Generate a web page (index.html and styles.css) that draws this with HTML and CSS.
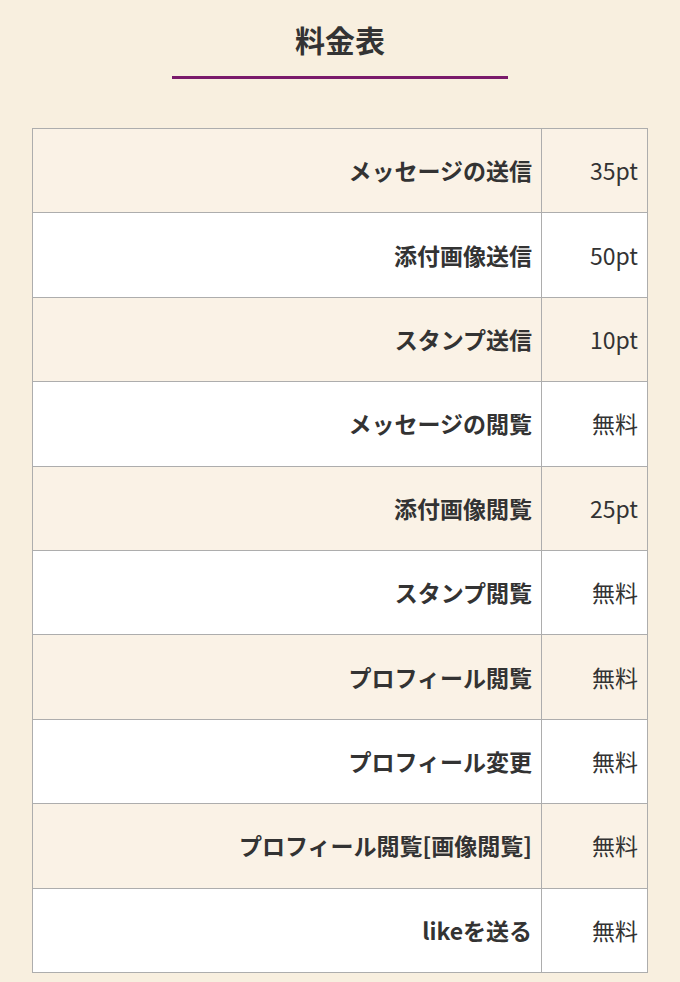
FILE: index.html
```html
<!DOCTYPE html>
<html lang="ja">
<head>
<meta charset="utf-8">
<link rel="stylesheet" href="styles.css">
</head>
<body>
<div class="page">
  <h2 class="title">料金表</h2>
  <div class="rule"></div>
  <table class="price">
    <tbody>
      <tr><th>メッセージの送信</th><td>35pt</td></tr>
      <tr><th>添付画像送信</th><td>50pt</td></tr>
      <tr><th>スタンプ送信</th><td>10pt</td></tr>
      <tr><th>メッセージの閲覧</th><td>無料</td></tr>
      <tr><th>添付画像閲覧</th><td>25pt</td></tr>
      <tr><th>スタンプ閲覧</th><td>無料</td></tr>
      <tr><th>プロフィール閲覧</th><td>無料</td></tr>
      <tr><th>プロフィール変更</th><td>無料</td></tr>
      <tr><th>プロフィール閲覧[画像閲覧]</th><td>無料</td></tr>
      <tr><th>likeを送る</th><td>無料</td></tr>
    </tbody>
  </table>
</div>
</body>
</html>
```
FILE: styles.css
```css
html, body {
  margin: 0;
  padding: 0;
}
body {
  background: #f8efdf;
  font-family: "Noto Sans CJK JP", "Noto Sans", sans-serif;
  color: #333333;
}
.page {
  display: flex;
  flex-direction: column;
  align-items: center;
  padding-top: 23px;
}
.title {
  margin: 0;
  font-size: 30px;
  line-height: 32px;
  font-weight: 700;
  color: #333333;
}
.rule {
  width: 336px;
  height: 3px;
  background: #7b1a6b;
  margin-top: 21px;
}
.price {
  margin-top: 49px;
  width: 616px;
  border-collapse: collapse;
  font-size: 23px;
}
.price tr:nth-child(odd) {
  background: #faf2e6;
}
.price tr:nth-child(even) {
  background: #ffffff;
}
.price th,
.price td {
  border: 1px solid #adadad;
  height: 83.4px;
  padding: 0 9px;
  text-align: right;
  vertical-align: middle;
  line-height: 1;
}
.price th {
  font-weight: 700;
}
.price td {
  font-weight: 400;
  width: 87px;
  padding-right: 9px;
}
```
